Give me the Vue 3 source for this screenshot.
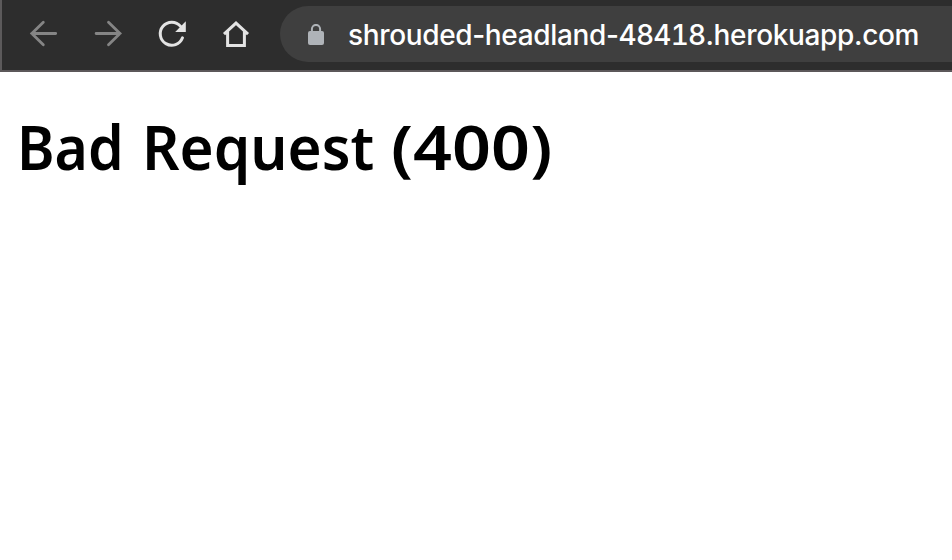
<script setup>
const name = 'shrouded-headland-'
const id = '48418'
const domain = '.herokuapp.com'
</script>

<template>
  <div class="window">
    <header class="toolbar">
      <nav class="controls">
        <svg class="icon dim" viewBox="0 0 32 32"><path d="M27.7 15.5H3.8M15.3 4.2 3.8 15.5 15.3 26.8" /></svg>
        <svg class="icon dim" viewBox="0 0 32 32"><path d="M4.1 15.5H28M16.5 4.2 28 15.5 16.5 26.8" /></svg>
        <svg class="icon" viewBox="0 0 32 32">
          <path d="M24.6 8.4A11.5 11.5 0 1 0 26.5 19.8" />
          <path class="solid" d="M29.8 3.2V14H19.2Z" />
        </svg>
        <svg class="icon" viewBox="0 0 32 32">
          <path class="square" d="M4 16.2 16 5.1 28 16.2M7.6 13.5V27.4H24.4V13.5" />
        </svg>
      </nav>
      <div class="address">
        <svg class="lock" viewBox="0 0 16 22">
          <rect x="0" y="7" width="16" height="14" rx="2" />
          <path d="M3.9 8V5A4.1 4.1 0 0 1 12.1 5V8" />
        </svg>
        <span class="host">{{ name }}<span class="digits">{{ id }}</span>{{ domain }}</span>
      </div>
    </header>
    <main class="page">
      <h1><span class="word bad">Bad</span> <span class="word request">Request</span> <span class="word code">(400)</span></h1>
    </main>
  </div>
</template>

<style>
body {
  margin: 0;
  background: #fff;
  overflow: hidden;
}
</style>

<style scoped>
.window {
  height: 560px;
  overflow: hidden;
}
.toolbar {
  box-sizing: border-box;
  display: flex;
  align-items: flex-start;
  height: 72px;
  padding: 6px 0 0 26px;
  border-left: 2px solid #5c5a5b;
  border-bottom: 2px solid #5c585a;
  background: #2d2d2d;
}
.controls {
  display: flex;
  flex: none;
  gap: 32px;
  width: 252px;
  padding-top: 12px;
}
.icon {
  flex: none;
  width: 32px;
  height: 32px;
  fill: none;
  stroke: #e3e3e3;
  stroke-width: 3;
  stroke-linecap: round;
}
.dim {
  stroke: #858585;
  stroke-width: 2.8;
}
.square {
  stroke-linecap: butt;
}
.solid {
  fill: #e3e3e3;
  stroke: none;
}
.address {
  box-sizing: border-box;
  display: flex;
  flex: 1;
  align-items: center;
  height: 56px;
  padding-left: 28px;
  border-radius: 28px 0 0 28px;
  background: #3f3f3f;
}
.lock {
  flex: none;
  width: 16px;
  height: 22px;
  margin: 2px 24px 0 0;
  fill: #afb3b8;
}
.lock path {
  fill: none;
  stroke: #afb3b8;
  stroke-width: 2;
}
.host {
  padding-top: 2px;
  color: #fff;
  font: 450 28px/54px Inter, sans-serif;
  letter-spacing: -0.35px;
  white-space: nowrap;
}
.digits {
  font-variant-numeric: tabular-nums;
  letter-spacing: -0.75px;
}
.page {
  padding: 30px 0 0 14px;
}
h1 {
  display: flex;
  margin: 0;
  color: #000;
  font: 600 62px/89px "Noto Sans", sans-serif;
  white-space: nowrap;
}
.word {
  flex: none;
  transform-origin: 0 50%;
}
.bad {
  width: 125px;
  margin-left: 3px;
  transform: scaleX(0.92);
}
.request {
  width: 249px;
  transform: scaleX(0.942);
}
.code {
  transform: scaleX(1.1);
}
</style>
